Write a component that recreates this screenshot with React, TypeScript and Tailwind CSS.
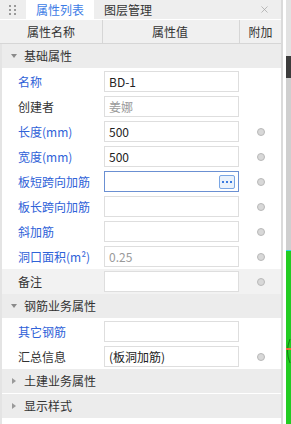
import { X } from 'lucide-react';

type Row = {
  label: string;
  value?: string;
  blue?: boolean;
  muted?: boolean;
  dot?: boolean;
  active?: boolean;
  shaded?: boolean;
};

type Group = { title: string; open: boolean; rows: Row[] };

const groups: Group[] = [
  {
    title: '基础属性',
    open: true,
    rows: [
      { label: '名称', value: 'BD-1', blue: true },
      { label: '创建者', value: '姜娜', muted: true },
      { label: '长度(mm)', value: '500', blue: true, dot: true },
      { label: '宽度(mm)', value: '500', blue: true, dot: true },
      { label: '板短跨向加筋', blue: true, dot: true, active: true },
      { label: '板长跨向加筋', blue: true, dot: true },
      { label: '斜加筋', blue: true, dot: true },
      { label: '洞口面积(m²)', value: '0.25', blue: true, muted: true, dot: true },
      { label: '备注', dot: true, shaded: true },
    ],
  },
  {
    title: '钢筋业务属性',
    open: true,
    rows: [
      { label: '其它钢筋', blue: true },
      { label: '汇总信息', value: '(板洞加筋)', dot: true },
    ],
  },
  { title: '土建业务属性', open: false, rows: [] },
  { title: '显示样式', open: false, rows: [] },
];

function GroupRow({ title, open }: { title: string; open: boolean }) {
  return (
    <div className="flex h-[25px] items-center border-b border-white bg-[#ececec]">
      <span className="flex w-[22px] justify-center pl-[2px]">
        {open ? (
          <svg width="6" height="4" viewBox="0 0 6 4">
            <path d="M0 0h6L3 4z" fill="#8a8a8a" />
          </svg>
        ) : (
          <svg width="4" height="6" viewBox="0 0 4 6">
            <path d="M0 0v6l4-3z" fill="#9a9a9a" />
          </svg>
        )}
      </span>
      <span className="text-[12px] text-[#333]">{title}</span>
    </div>
  );
}

function PropRow({ row }: { row: Row }) {
  return (
    <div className={`flex h-[25px] items-center ${row.shaded ? 'bg-[#f2f2f2]' : 'bg-white'}`}>
      <div className={`w-[101px] pl-4 text-[12px] ${row.blue ? 'text-[#2f62d8]' : 'text-[#333]'}`}>
        {row.label}
      </div>
      <div className="w-[137px] px-[1px]">
        <div
          className={`flex h-[21px] items-center justify-between border bg-white pl-[4px] pr-[3px] text-[12px] ${
            row.active ? 'border-[#6b90d2]' : 'border-[#dedede]'
          } ${row.muted ? 'text-[#9a9a9a]' : 'text-[#222]'}`}
        >
          <span>{row.value ?? ''}</span>
          {row.active && (
            <span className="flex h-[14px] w-[16px] items-center justify-center gap-[2px] rounded-[2px] border border-[#7aa6e4] bg-[#eaf2fc]">
              <span className="h-[2px] w-[2px] bg-[#3b7be0]" />
              <span className="h-[2px] w-[2px] bg-[#3b7be0]" />
              <span className="h-[2px] w-[2px] bg-[#3b7be0]" />
            </span>
          )}
        </div>
      </div>
      <div className="flex flex-1 justify-center">
        {row.dot && <span className="h-[8px] w-[8px] rounded-full border border-[#b9b9b9] bg-[#d8d8d8]" />}
      </div>
    </div>
  );
}

export default function App() {
  return (
    <div
      className="flex h-[424px] w-[291px] overflow-hidden bg-white"
      style={{ fontFamily: '"Noto Sans CJK SC", "Noto Sans", sans-serif' }}
    >
      {/* Panel */}
      <div className="flex w-[283px] flex-col border-r-2 border-[#dadada] bg-white leading-none">
        {/* Tabs */}
        <div className="flex h-[19px] items-stretch bg-[#eeeeee]">
          <div className="grid w-[26px] grid-cols-2 content-center justify-center gap-x-[3px] gap-y-[2px] pl-[9px] pr-[10px]">
            {Array.from({ length: 6 }).map((_, i) => (
              <span key={i} className="h-[2px] w-[2px] bg-[#9a9a9a]" />
            ))}
          </div>
          <div className="flex w-[68px] items-center justify-center bg-white text-[12px] text-[#3d7ce6]">属性列表</div>
          <div className="flex items-center pl-[10px] text-[12px] text-[#333]">图层管理</div>
          <div className="ml-auto flex items-center pr-[11px]">
            <X size={11} strokeWidth={1.5} className="text-[#a0a0a0]" />
          </div>
        </div>

        {/* Header */}
        <div className="flex h-[25px] border-t border-white border-b border-b-[#d6d6d6] bg-[#f0f0f0] text-[12px] text-[#333]">
          <div className="flex w-[103px] items-center justify-center border-r border-[#d6d6d6]">属性名称</div>
          <div className="flex w-[137px] items-center justify-center border-r border-[#d6d6d6] pr-[2px]">属性值</div>
          <div className="flex flex-1 items-center justify-center">附加</div>
        </div>

        {/* Body */}
        <div className="flex-1 border-l-2 border-[#e4e4e4]">
          {groups.map((g) => (
            <div key={g.title}>
              <GroupRow title={g.title} open={g.open} />
              {g.rows.map((r) => (
                <PropRow key={r.label} row={r} />
              ))}
            </div>
          ))}
        </div>
      </div>

      {/* Canvas strip behind the panel */}
      <div className="w-[3px] bg-white" />
      <div className="flex flex-1 flex-col">
        <div className="h-[56px] bg-[#e2e2e2]" />
        <div className="h-[22px] bg-[#3c3c3c]" />
        <div className="h-[172px] bg-[#cfcfcf]" />
        <div className="h-[1px] bg-[#33d6e6]" />
        <div className="relative flex-1 bg-[#22cc22]">
          <svg className="absolute left-0 top-[88px]" width="5" height="24" viewBox="0 0 5 24">
            <path d="M4 0 Q-1 12 4 24" stroke="#137a13" strokeWidth="1" fill="none" />
            <path d="M0 10h5" stroke="#f06a3a" strokeWidth="2" />
          </svg>
        </div>
      </div>
    </div>
  );
}
